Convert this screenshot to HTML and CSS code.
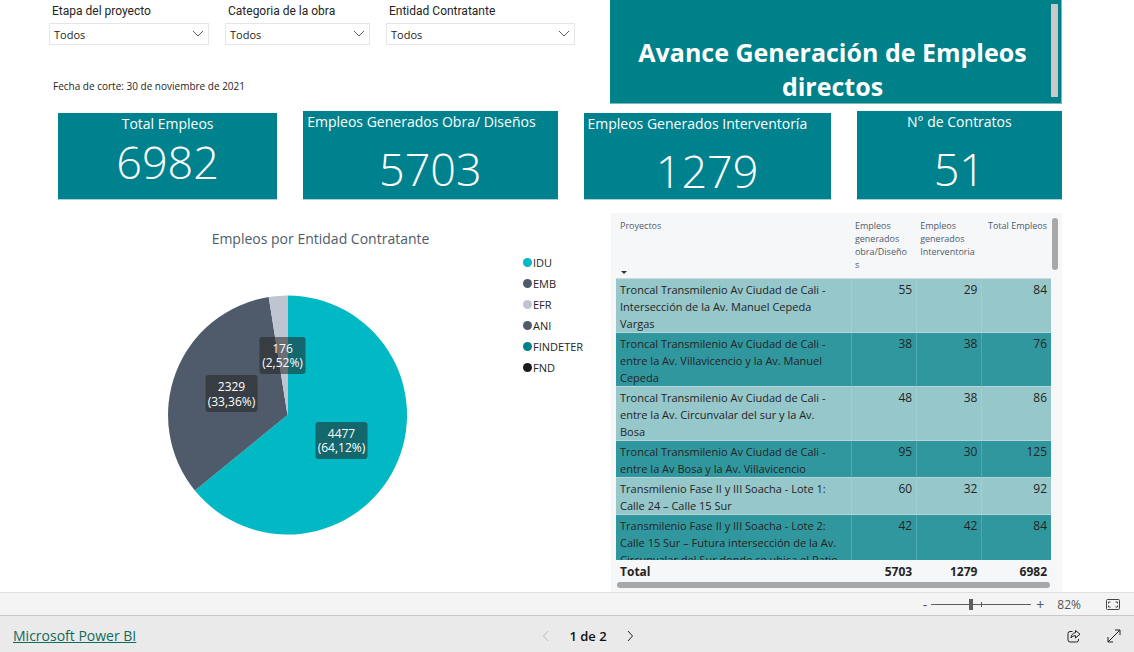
FILE: index.html
```html
<!DOCTYPE html>
<html lang="es">
<head>
<meta charset="utf-8">
<title>Avance Generación de Empleos directos</title>
<meta name="viewport" content="width=device-width, initial-scale=1">
<link rel="stylesheet" href="styles.css">
</head>
<body>
<main class="report">
  <section class="top">
    <div class="intro">
      <form class="filters">
        <div class="filter">
          <label for="etapa">Etapa del proyecto</label>
          <div class="select"><select id="etapa"><option>Todos</option></select>
            <svg viewBox="0 0 12 8" aria-hidden="true"><path d="M1 1l5 5 5-5"/></svg></div>
        </div>
        <div class="filter">
          <label for="categoria">Categoria de la obra</label>
          <div class="select"><select id="categoria"><option>Todos</option></select>
            <svg viewBox="0 0 12 8" aria-hidden="true"><path d="M1 1l5 5 5-5"/></svg></div>
        </div>
        <div class="filter">
          <label for="entidad">Entidad Contratante</label>
          <div class="select"><select id="entidad"><option>Todos</option></select>
            <svg viewBox="0 0 12 8" aria-hidden="true"><path d="M1 1l5 5 5-5"/></svg></div>
        </div>
      </form>
      <p class="cutoff">Fecha de corte: 30 de noviembre de 2021</p>
    </div>
    <header class="banner">
      <h1>Avance Generación de Empleos directos</h1>
      <span class="banner-scroll"></span>
    </header>
  </section>

  <section class="cards">
    <article class="card low tight"><h2>Total Empleos</h2><p>6982</p></article>
    <article class="card start"><h2>Empleos Generados Obra/ Diseños</h2><p>5703</p></article>
    <article class="card low start"><h2>Empleos Generados Interventoría</h2><p>1279</p></article>
    <article class="card"><h2>N° de Contratos</h2><p>51</p></article>
  </section>

  <section class="detail">
    <figure class="chart">
      <figcaption>Empleos por Entidad Contratante</figcaption>
      <div class="plot">
        <svg class="pie" viewBox="0 0 240 240" role="img" aria-label="Empleos por Entidad Contratante">
          <path fill="#01b8c5" d="M120 120V0.500A119.500 119.500 0 1 1 27.400 195.500Z"/>
          <path fill="#4f5b6b" d="M120 120L27.400 195.500A119.500 119.500 0 0 1 101.200 2Z"/>
          <path fill="#bfc5d0" d="M120 120L101.200 2A119.500 119.500 0 0 1 120 0.500Z"/>
          <g class="tag">
            <rect x="92" y="42" width="46" height="37" rx="3"/>
            <text x="115" y="58">176</text><text x="115" y="72">(2,52%)</text>
            <rect x="38" y="80" width="52" height="37" rx="3"/>
            <text x="64" y="96">2329</text><text x="64" y="111">(33,36%)</text>
            <rect x="148" y="127" width="52" height="37" rx="3"/>
            <text x="174" y="143">4477</text><text x="174" y="157">(64,12%)</text>
          </g>
        </svg>
        <ul class="legend">
          <li class="idu">IDU</li>
          <li class="emb">EMB</li>
          <li class="efr">EFR</li>
          <li class="ani">ANI</li>
          <li class="findeter">FINDETER</li>
          <li class="fnd">FND</li>
        </ul>
      </div>
    </figure>

    <div class="projects">
      <div class="viewport">
        <table>
          <colgroup><col class="c-name"><col class="c-num"><col class="c-num"><col class="c-total"></colgroup>
          <thead>
            <tr>
              <th>Proyectos<span class="sort"></span></th>
              <th>Empleos generados obra/Diseño<br>s</th>
              <th>Empleos generados Interventoria</th>
              <th class="right">Total Empleos</th>
            </tr>
          </thead>
          <tbody>
            <tr><td>Troncal Transmilenio Av Ciudad de Cali -<br>Intersección de la Av. Manuel Cepeda<br>Vargas</td><td>55</td><td>29</td><td>84</td></tr>
            <tr><td>Troncal Transmilenio Av Ciudad de Cali -<br>entre la Av. Villavicencio y la Av. Manuel<br>Cepeda</td><td>38</td><td>38</td><td>76</td></tr>
            <tr><td>Troncal Transmilenio Av Ciudad de Cali -<br>entre la Av. Circunvalar del sur y la Av.<br>Bosa</td><td>48</td><td>38</td><td>86</td></tr>
            <tr><td>Troncal Transmilenio Av Ciudad de Cali -<br>entre la Av Bosa y la Av. Villavicencio</td><td>95</td><td>30</td><td>125</td></tr>
            <tr><td>Transmilenio Fase II y III Soacha - Lote 1:<br>Calle 24 – Calle 15 Sur</td><td>60</td><td>32</td><td>92</td></tr>
            <tr><td>Transmilenio Fase II y III Soacha - Lote 2:<br>Calle 15 Sur – Futura intersección de la Av.<br>Circunvalar del Sur donde se ubica el Patio</td><td>42</td><td>42</td><td>84</td></tr>
          </tbody>
          <tfoot>
            <tr><td>Total</td><td>5703</td><td>1279</td><td>6982</td></tr>
          </tfoot>
        </table>
      </div>
      <span class="vbar"></span>
      <span class="hbar"></span>
    </div>
  </section>
</main>

<div class="zoombar">
  <button type="button" class="step" aria-label="Alejar">-</button>
  <div class="slider"><input type="range" min="0" max="100" value="39" aria-label="Zoom"></div>
  <button type="button" class="step" aria-label="Acercar">+</button>
  <span class="percent">82%</span>
  <button type="button" aria-label="Ajustar a la página">
    <svg width="14" height="11" viewBox="0 0 14 11" fill="none" stroke="#444"><rect x="0.500" y="0.500" width="13" height="10" rx="1"/><path d="M4.500 3H2.500v1.500M9.500 3h2v1.500M4.500 8h-2V6.500M9.500 8h2V6.500"/></svg>
  </button>
</div>

<footer class="footer">
  <a href="#">Microsoft Power BI</a>
  <nav class="pager">
    <button type="button" aria-label="Página anterior" disabled><svg width="8" height="12" viewBox="0 0 8 12"><path d="M6 1L1.500 6 6 11"/></svg></button>
    <span>1 de 2</span>
    <button type="button" aria-label="Página siguiente"><svg width="8" height="12" viewBox="0 0 8 12"><path d="M2 1l4.500 5L2 11"/></svg></button>
  </nav>
  <div class="actions">
    <button type="button" aria-label="Compartir"><svg width="14" height="14" viewBox="0 0 14 14"><path d="M5.500 2.500H3a2 2 0 0 0-2 2V11a2 2 0 0 0 2 2h6.500a2 2 0 0 0 2-2v-1M8.500 1.500L13 5.200 8.500 9V6.700C6.300 6.700 5 7.500 4 9c.2-2.800 1.700-5 4.500-5.300z"/></svg></button>
    <button type="button" aria-label="Pantalla completa"><svg width="14" height="14" viewBox="0 0 14 14"><path d="M1 13L13 1M8 1h5v5M1 8v5h5"/></svg></button>
  </div>
</footer>
</body>
</html>
```
FILE: styles.css
```css
* { box-sizing: border-box; }

body {
  margin: 0;
  height: 100vh;
  display: flex;
  flex-direction: column;
  background: #fff;
  color: #252423;
  font-family: "Open Sans", "Noto Sans", sans-serif;
  font-size: 11px;
}

h1, h2, p, ul, figure { margin: 0; padding: 0; }

button {
  border: 0;
  padding: 0;
  background: none;
  color: inherit;
  font: inherit;
  display: flex;
  align-items: center;
  justify-content: center;
}

.report {
  flex: 1;
  min-height: 0;
  display: flex;
  flex-direction: column;
  padding: 0 72px 0 49px;
}

.top {
  display: grid;
  grid-template-columns: 561fr 452fr;
}

.filters {
  display: grid;
  grid-template-columns: 160fr 145fr 189fr;
  gap: 16px;
  padding: 4px 35px 0 0;
}

.filter label {
  display: block;
  padding-left: 3px;
  font: 400 12px/15px Roboto, sans-serif;
  margin-bottom: 4px;
}

.select {
  display: flex;
  align-items: center;
  border: 1px solid #e6e6e6;
  height: 22px;
  padding-right: 4px;
}

.select select {
  appearance: none;
  flex: 1;
  min-width: 0;
  border: 0;
  padding: 0 4px;
  background: none;
  color: inherit;
  font: inherit;
}

.select svg {
  width: 12px;
  height: 8px;
  fill: none;
  stroke: #605e5c;
}

.cutoff {
  padding: 33px 0 0 4px;
  font-size: 10px;
  line-height: 16px;
}

.banner {
  position: relative;
  padding: 35px 20px 0 14px;
  background: #008088;
  border-right: 1px solid #7cb9bd;
  border-bottom: 1px solid #7cb9bd;
  color: #fff;
  text-align: center;
}

.banner h1 { font-size: 25px; line-height: 34px; }

.banner-scroll {
  position: absolute;
  top: 4px;
  right: 3px;
  bottom: 6px;
  width: 7px;
  background: #c8c8c8;
}

.cards {
  display: grid;
  grid-template-columns: 219fr 254fr 247fr 205fr;
  gap: 26px;
  padding: 7px 0 0 9px;
}

.card {
  min-height: 88px;
  background: #00828e;
  border-bottom: 1px solid #a5d3d6;
  color: #fff;
  text-align: center;
}

.card.low { margin-top: 2px; min-height: 86px; }

.card h2 {
  padding: 0 4px;
  font-size: 14px;
  font-weight: 400;
  line-height: 22px;
}

.card.start h2 { text-align: left; }

.card p {
  font-size: 45px;
  font-weight: 300;
  line-height: 56px;
  padding-top: 8px;
}

.card.tight p { line-height: 54px; padding-top: 0; }

.detail {
  flex: 1;
  min-height: 0;
  display: grid;
  grid-template-columns: 525fr 451fr;
  gap: 28px;
  padding: 13px 0 0 9px;
}

.chart figcaption {
  padding-top: 16px;
  font-size: 14px;
  line-height: 20px;
  text-align: center;
  color: #4f5b6b;
}

.plot { display: flex; padding-top: 3px; }

.pie { flex: 1; height: 240px; margin: 43px 6px 0 0; }

.tag rect { fill: #252423; fill-opacity: 0.55; }
.tag text { fill: #fff; font-size: 12px; text-anchor: middle; }

.legend { width: 60px; list-style: none; }

.legend li {
  display: flex;
  align-items: center;
  gap: 1px;
  line-height: 21px;
}

.legend li::before {
  content: "";
  width: 9px;
  height: 9px;
  flex: none;
  border-radius: 50%;
  background: currentcolor;
}

.idu::before { color: #01b8c5; }
.emb::before, .ani::before { color: #4f5b6b; }
.efr::before { color: #bfc5d0; }
.findeter::before { color: #008088; }
.fnd::before { color: #1a1a1a; }

.projects {
  min-height: 0;
  display: grid;
  grid-template-columns: 1fr 6px;
  grid-template-rows: 1fr 6px;
  column-gap: 1px;
  padding: 5px 4px 4px 5px;
  background: #f5f7f9;
}

.viewport { min-height: 0; overflow: hidden; }

table {
  width: 100%;
  table-layout: fixed;
  border-spacing: 0;
  font-size: 11px;
  line-height: 17px;
}

.c-name { width: 54%; }
.c-num { width: 15%; }
.c-total { width: 16%; }

th {
  position: relative;
  height: 61px;
  padding: 1px 4px 0;
  border-bottom: 1px solid #cfd9df;
  color: #4f5b6b;
  font-size: 9px;
  font-weight: 400;
  line-height: 13px;
  text-align: left;
  vertical-align: top;
}

.right { text-align: right; }

.sort {
  position: absolute;
  left: 5px;
  bottom: 4px;
  border: 3px solid transparent;
  border-top-color: #333;
  border-bottom: 0;
}

td {
  padding: 2px 4px 0;
  border-bottom: 1px solid #b5d6da;
  vertical-align: top;
}

td + td {
  text-align: right;
  border-left: 1px solid #a3ced3;
  font-size: 12px;
}

tbody tr { background: #95c7cb; }
tbody tr:nth-child(even) { background: #31979e; }
tbody tr:nth-child(even) td + td { border-left-color: #52a8ae; }

tfoot td {
  position: sticky;
  bottom: 0;
  height: 22px;
  padding-top: 3px;
  border: 0;
  background: #f5f7f9;
  font-size: 12px;
  font-weight: 700;
}

tfoot td + td { border: 0; }

.vbar {
  height: 52px;
  border-radius: 3px;
  background: #a8a8a8;
}

.hbar {
  margin: 0 1px;
  border-radius: 3px;
  background: #a8a8a8;
}

.zoombar {
  display: flex;
  align-items: center;
  justify-content: flex-end;
  height: 23px;
  padding-right: 14px;
  background: #f4f4f4;
  border-top: 1px solid #dedede;
  color: #555;
  font-size: 12px;
}

.step { font-size: 14px; }

.slider {
  position: relative;
  display: flex;
  width: 100px;
  margin: 0 5px 0 4px;
}

.slider::after {
  content: "";
  position: absolute;
  left: 50%;
  top: 4px;
  width: 1px;
  height: 5px;
  background: #605e5c;
}

.slider input {
  appearance: none;
  width: 100%;
  height: 12px;
  margin: 0;
  background: linear-gradient(#605e5c, #605e5c) center / 100% 1px no-repeat;
}

.slider input::-webkit-slider-thumb {
  appearance: none;
  width: 4px;
  height: 11px;
  background: #605e5c;
}

.percent { margin: 0 25px 0 13px; }

.footer {
  display: grid;
  grid-template-columns: 1fr auto 1fr;
  align-items: center;
  height: 37px;
  padding: 3px 13px 0 13px;
  background: #eaeaea;
  border-top: 1px solid #c8c8c8;
  color: #111;
}

.footer a {
  justify-self: start;
  color: #0f6b5c;
  font-size: 14px;
}

.footer svg { fill: none; stroke: #222; }

.pager {
  display: flex;
  align-items: center;
  gap: 19px;
  font-size: 13px;
  font-weight: 600;
  margin-left: 42px;
}

.pager button:disabled svg { stroke: #bbb; }

.actions { display: flex; justify-content: flex-end; gap: 26px; }
```
